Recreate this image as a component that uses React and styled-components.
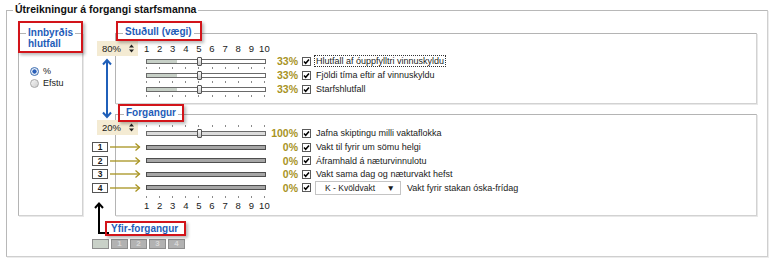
import styled, { createGlobalStyle } from 'styled-components';

const BLUE = '#1e5cb8';
const OLIVE = '#a8931f';

const GlobalStyle = createGlobalStyle`
  html, body { margin: 0; padding: 0; background: #fff; }
  body {
    font-family: "Liberation Sans", Arial, sans-serif;
    font-size: 9px;
    color: #1a1a1a;
  }
  * { box-sizing: border-box; }
`;

const Page = styled.div`
  width: 771px;
  height: 260px;
  padding: 10px 0 0 6px;
`;

const Group = styled.section`
  width: 762px;
  height: 247px;
  border: 1px solid;
  border-color: #b8b8b8 #cfcfcf #cfcfcf #b8b8b8;
  box-shadow: 1px 1px 0 #ececec;
`;

const GroupTitle = styled.div`
  width: fit-content;
  margin: -8px 0 0 6px;
  padding: 0 2px;
  background: #fff;
  font-size: 10.5px;
  font-weight: bold;
  line-height: 13px;
  color: #111;
`;

const Body = styled.div`
  display: flex;
  align-items: flex-start;
  gap: 6px;
  margin-top: 17px;
  padding-left: 11px;
`;

const Panel = styled.div`
  display: flex;
  flex-direction: column;
  flex: none;
  width: ${(p) => p.$w}px;
  height: ${(p) => p.$h}px;
  margin-top: ${(p) => p.$mt || 0}px;
  padding-left: ${(p) => p.$pl || 0}px;
  border: 1px solid;
  border-color: #b4b4b4 #d2d2d2 #d2d2d2 #b4b4b4;
  box-shadow: 1px 1px 0 #e8e8e8;
`;

const Callout = styled.div`
  position: relative;
  z-index: 3;
  flex: none;
  width: ${(p) => p.$w}px;
  height: ${(p) => p.$h}px;
  margin: ${(p) => p.$m};
  padding: ${(p) => p.$pad};
  border: 2px solid #d2141a;
  box-shadow: 2px 2px 3px rgba(0, 0, 0, 0.28);
  color: ${BLUE};
  font-size: 10px;
  font-weight: bold;
  line-height: ${(p) => p.$lh}px;
  white-space: nowrap;
`;

const CalloutText = styled.span`
  background: #fff;
  padding: 0 2px;
`;

const RadioList = styled.div`
  display: flex;
  flex-direction: column;
  margin: 12px 0 0 11px;
`;

const RadioRow = styled.label`
  display: flex;
  align-items: center;
  gap: 4px;
  height: 12px;
`;

const RadioDot = styled.span`
  flex: none;
  width: 9px;
  height: 9px;
  border-radius: 50%;
  border: 1px solid ${(p) => (p.$on ? '#3b6db0' : '#a8a8a8')};
  background: ${(p) =>
    p.$on
      ? 'radial-gradient(circle, #2a5fb8 0 1.8px, #dfe8f5 2.4px, #fff 100%)'
      : 'linear-gradient(135deg, #f6f6f6, #cfcfcf)'};
`;

const RightArea = styled.div`
  display: flex;
  width: 668px;
`;

const Gutter = styled.div`
  display: flex;
  flex-direction: column;
  flex: none;
  width: 26px;
`;

const Spinner = styled.div`
  position: relative;
  z-index: 2;
  display: flex;
  align-items: center;
  justify-content: space-between;
  flex: none;
  width: 41px;
  height: 15px;
  margin: ${(p) => p.$mt}px 0 0 8px;
  padding: 0 4px 0 5px;
  background: #f4ebd3;
  font-size: 9.5px;
`;

const SpinArrows = styled.svg`
  flex: none;
`;

const BlueArrow = styled.svg`
  flex: none;
  margin: 2px 0 0 12px;
`;

const NumList = styled.div`
  display: flex;
  flex-direction: column;
  margin-top: 5.5px;
`;

const NumRow = styled.div`
  position: relative;
  z-index: 2;
  display: flex;
  align-items: center;
  height: 13.5px;
`;

const NumBox = styled.div`
  flex: none;
  width: 16px;
  height: 10px;
  margin-left: 3px;
  border: 1px solid #555;
  background: #fff;
  font-weight: bold;
  font-size: 8.5px;
  line-height: 8px;
  text-align: center;
`;

const RowArrow = styled.svg`
  flex: none;
  margin-left: 2px;
`;

const ElbowRow = styled.div`
  display: flex;
  align-items: flex-end;
  height: 41px;
`;

const Elbow = styled.svg`
  flex: none;
  margin-left: 4px;
`;

const MiniBoxes = styled.div`
  display: flex;
  gap: 2px;
  margin: 3.5px 0 0 3px;
`;

const MiniBox = styled.div`
  flex: none;
  width: 17px;
  height: 10px;
  border: 1px solid #8e8e8e;
  background: ${(p) => (p.$blank ? '#c9d1c8' : '#b2b2b2')};
  color: #d8d8d8;
  font-weight: bold;
  font-size: 8px;
  line-height: 8px;
  text-align: center;
`;

const PanelsCol = styled.div`
  display: flex;
  flex-direction: column;
  flex: none;
  width: 642px;
`;

const Scale = styled.div`
  display: grid;
  grid-template-columns: repeat(10, 13.1px);
  height: 12px;
  margin: ${(p) => p.$mt}px 0 0 -6px;
  font-size: 9.5px;
  line-height: 12px;
  text-align: center;
`;

const Ticks = styled.div`
  display: grid;
  grid-template-columns: repeat(10, 13.1px);
  height: 4px;
  margin: ${(p) => p.$mt || 0}px 0 0 -6px;
`;

const Tick = styled.span`
  justify-self: center;
  align-self: center;
  width: 1px;
  height: 2px;
  background: #8a8a8a;
`;

const SliderRow = styled.div`
  display: flex;
  align-items: center;
  height: ${(p) => p.$h}px;
  margin-top: ${(p) => p.$mt || 0}px;
`;

const Track = styled.div`
  position: relative;
  flex: none;
  width: 120px;
  height: 5px;
  border: 1px solid ${(p) => (p.$off ? '#4e4e4e' : '#6a6a6a')};
  background: ${(p) =>
    p.$off
      ? '#a6a6a6'
      : `linear-gradient(to right, ${p.$fill} 0 ${p.$pct}px, #fff ${p.$pct}px)`};
`;

const Thumb = styled.span`
  position: absolute;
  left: 50px;
  top: -3px;
  width: 5px;
  height: 9px;
  border: 1px solid #555;
  border-radius: 1px;
  background: linear-gradient(#fafafa, #c6c6c6);
`;

const Percent = styled.span`
  flex: none;
  width: 32px;
  color: ${OLIVE};
  font-size: 10.5px;
  font-weight: bold;
  text-align: right;
`;

const Check = styled.svg`
  flex: none;
  margin-left: 4px;
`;

const RowLabel = styled.span`
  margin-left: ${(p) => p.$ml || 4}px;
  padding: 0 1px;
  line-height: 10px;
  white-space: nowrap;
  outline: ${(p) => (p.$focus ? '1px dotted #333' : 'none')};
`;

const Select = styled.div`
  display: flex;
  align-items: center;
  justify-content: space-between;
  flex: none;
  width: 86px;
  height: 14px;
  margin-left: 4px;
  padding: 0 5px 0 9px;
  border: 1px solid #c4c4c4;
  background: #fff;
  font-size: 8.5px;
`;

const CheckIcon = () => (
  <Check width="9" height="9" viewBox="0 0 9 9">
    <rect x="0.5" y="0.5" width="8" height="8" fill="#fff" stroke="#5a5a5a" />
    <path d="M2 4.4 L3.7 6.3 L7 2.5" fill="none" stroke="#000" strokeWidth="1.5" />
  </Check>
);

const SpinIcon = () => (
  <SpinArrows width="5" height="9" viewBox="0 0 5 9">
    <path d="M0 3.5 L2.5 0.5 L5 3.5 Z M0 5.5 L2.5 8.5 L5 5.5 Z" fill="#222" />
  </SpinArrows>
);

const TickRow = ({ mt }) => (
  <Ticks $mt={mt}>
    {Array.from({ length: 10 }, (_, i) => (
      <Tick key={i} />
    ))}
  </Ticks>
);

const NumberScale = ({ mt }) => (
  <Scale $mt={mt}>
    {Array.from({ length: 10 }, (_, i) => (
      <span key={i}>{i + 1}</span>
    ))}
  </Scale>
);

const upperRows = [
  'Hlutfall af óuppfylltri vinnuskyldu',
  'Fjöldi tíma eftir af vinnuskyldu',
  'Starfshlutfall',
];

const lowerRows = [
  'Vakt til fyrir um sömu helgi',
  'Áframhald á næturvinnulotu',
  'Vakt sama dag og næturvakt hefst',
  'Vakt fyrir stakan óska-frídag',
];

const App = () => {
  return (
    <Page>
      <GlobalStyle />
      <Group>
        <GroupTitle>Útreikningur á forgangi starfsmanna</GroupTitle>
        <Body>
          <Panel $w={65} $h={183}>
            <Callout $w={65} $h={32} $m="-13px -1px 0" $pad="4px 0 0 6px" $lh={11}>
              <CalloutText>Innbyrðis</CalloutText>
              <br />
              <CalloutText>hlutfall</CalloutText>
            </Callout>
            <RadioList>
              <RadioRow>
                <RadioDot $on />
                %
              </RadioRow>
              <RadioRow>
                <RadioDot />
                Efstu
              </RadioRow>
            </RadioList>
          </Panel>

          <RightArea>
            <Gutter>
              <Spinner $mt={8}>
                80%
                <SpinIcon />
              </Spinner>
              <BlueArrow width="12" height="61" viewBox="0 0 12 61">
                <g fill="none" stroke="#1f5fb9" strokeWidth="2">
                  <path d="M6 2 V59" />
                  <path d="M2 6.5 L6 2 L10 6.5" />
                  <path d="M2 54.5 L6 59 L10 54.5" />
                </g>
              </BlueArrow>
              <Spinner $mt={1}>
                20%
                <SpinIcon />
              </Spinner>
              <NumList>
                {[1, 2, 3, 4].map((n) => (
                  <NumRow key={n}>
                    <NumBox>{n}</NumBox>
                    <RowArrow width="31" height="10" viewBox="0 0 31 10">
                      <g fill="none" stroke={OLIVE} strokeWidth="1.3">
                        <path d="M0 5 H29.5" />
                        <path d="M25.5 1.5 L29.5 5 L25.5 8.5" />
                      </g>
                    </RowArrow>
                  </NumRow>
                ))}
              </NumList>
              <ElbowRow>
                <Elbow width="16" height="41" viewBox="0 0 16 41">
                  <g fill="none" stroke="#000" strokeWidth="2">
                    <path d="M6 9 V38 H16" />
                    <path d="M2 13 L6 8.5 L10 13" />
                  </g>
                </Elbow>
                <Callout $w={81} $h={15} $m="0 0 0 -4px" $pad="0 0 0 2px" $lh={11}>
                  <CalloutText>Yfir-forgangur</CalloutText>
                </Callout>
              </ElbowRow>
              <MiniBoxes>
                <MiniBox $blank />
                {[1, 2, 3, 4].map((n) => (
                  <MiniBox key={n}>{n}</MiniBox>
                ))}
              </MiniBoxes>
            </Gutter>

            <PanelsCol>
              <Panel $w={642} $h={71} $pl={30}>
                <Callout $w={86} $h={20} $m="-13px 0 0 -30px" $pad="2px 0 0 5px" $lh={14}>
                  <CalloutText>Stuðull (vægi)</CalloutText>
                </Callout>
                <NumberScale mt={2} />
                {upperRows.map((label, i) => (
                  <div key={label}>
                    <SliderRow $h={10} $mt={i === 0 ? 1 : 0}>
                      <Track $fill="#c7d0c7" $pct={30}>
                        <Thumb />
                      </Track>
                      <Percent>33%</Percent>
                      <CheckIcon />
                      <RowLabel $focus={i === 0}>{label}</RowLabel>
                    </SliderRow>
                    <TickRow />
                  </div>
                ))}
              </Panel>

              <Panel $w={642} $h={102} $mt={10} $pl={30}>
                <Callout $w={66} $h={18} $m="-11px 0 0 -28px" $pad="1px 0 0 4px" $lh={12}>
                  <CalloutText>Forgangur</CalloutText>
                </Callout>
                <TickRow mt={2} />
                <SliderRow $h={10}>
                  <Track $fill="#dcdcdc" $pct={120}>
                    <Thumb />
                  </Track>
                  <Percent>100%</Percent>
                  <CheckIcon />
                  <RowLabel>Jafna skiptingu milli vaktaflokka</RowLabel>
                </SliderRow>
                {lowerRows.map((label, i) => (
                  <SliderRow key={label} $h={13.5} $mt={i === 0 ? 2.5 : 0}>
                    <Track $off />
                    <Percent>0%</Percent>
                    <CheckIcon />
                    {i === 3 ? (
                      <>
                        <Select>
                          <span>K - Kvöldvakt</span>
                          <span>▼</span>
                        </Select>
                        <RowLabel $ml={5}>{label}</RowLabel>
                      </>
                    ) : (
                      <RowLabel>{label}</RowLabel>
                    )}
                  </SliderRow>
                ))}
                <TickRow />
                <NumberScale mt={1} />
              </Panel>
            </PanelsCol>
          </RightArea>
        </Body>
      </Group>
    </Page>
  );
};

export default App;
